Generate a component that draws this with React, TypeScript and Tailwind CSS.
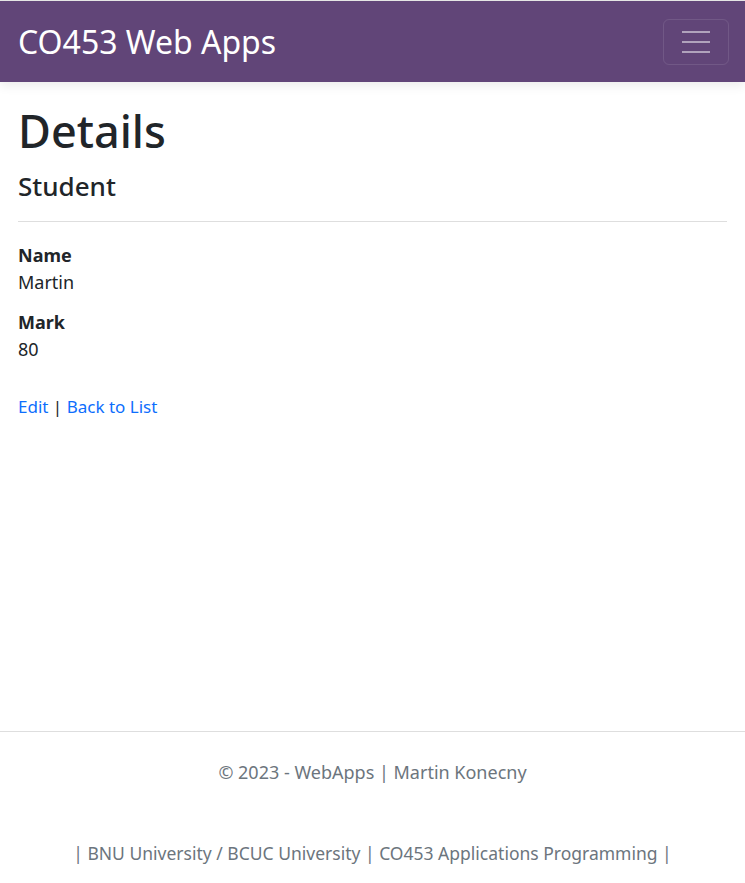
export default function App() {
  return (
    <div
      className="flex min-h-screen flex-col bg-white text-[#212529]"
      style={{ fontFamily: '"Noto Sans", "Open Sans", sans-serif' }}
    >
      <header className="border-t border-[#e5e5e5] bg-[#614578] shadow-[0_4px_10px_rgba(0,0,0,0.08)]">
        <nav className="flex h-[81px] items-center justify-between pl-[18px] pr-[16px]">
          <a href="#" className="text-[32px] leading-none text-white">
            CO453 Web Apps
          </a>
          <button className="flex h-[46px] w-[66px] flex-col items-center justify-center gap-[8px] rounded-[6px] border border-white/10">
            <span className="h-[2px] w-[28px] bg-white/50" />
            <span className="h-[2px] w-[28px] bg-white/50" />
            <span className="h-[2px] w-[28px] bg-white/50" />
          </button>
        </nav>
      </header>

      <main className="flex-1 px-[18px] pt-[22px]">
        <h1 className="text-[45px] font-medium leading-[54px]">Details</h1>
        <h4 className="mt-[13px] text-[26px] font-medium leading-[31px]">Student</h4>
        <hr className="mt-[19px] border-[#dedede]" />
        <dl className="mt-[20px] text-[18px] leading-[27px]">
          <dt className="font-bold">Name</dt>
          <dd className="mb-[13px]">Martin</dd>
          <dt className="font-bold">Mark</dt>
          <dd className="mb-[13px]">80</dd>
        </dl>
        <p className="mt-[30px] text-[17px] leading-[27px]">
          <a href="#" className="text-[#0d6efd]">Edit</a> |{" "}
          <a href="#" className="text-[#0d6efd]">Back to List</a>
        </p>
      </main>

      <footer className="border-t border-[#dedede] pb-[16px] pt-[27px] text-center text-[18px] leading-[27px] text-[#6c757d]">
        <p>© 2023 - WebApps | Martin Konecny</p>
        <p className="mt-[54px] text-[17.5px]">| BNU University / BCUC University | CO453 Applications Programming |</p>
      </footer>
    </div>
  );
}
